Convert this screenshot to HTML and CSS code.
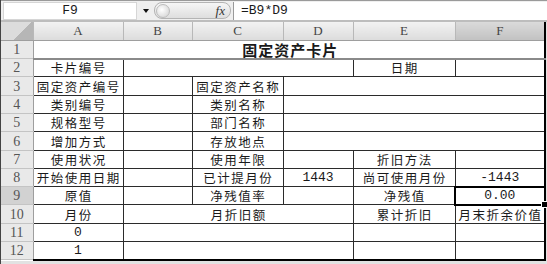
FILE: index.html
```html
<!DOCTYPE html>
<html lang="zh">
<head>
    <meta charset="UTF-8">
    <title>固定资产卡片</title>
    <link rel="stylesheet" href="styles.css">
</head>
<body>
<div class="window">
    <div class="formula-bar">
        <div class="name-box">F9</div>
        <span class="drop"></span>
        <div class="fx-group">
            <span class="knob"></span>
            <span class="fx">fx</span>
        </div>
        <div class="formula">=B9*D9</div>
    </div>
    <div class="gap"></div>

    <table class="sheet">
        <colgroup>
            <col class="w-rh"><col class="w-a"><col class="w-b"><col class="w-c"><col class="w-d"><col class="w-e"><col class="w-f">
        </colgroup>
        <tr class="col-head">
            <th class="corner"></th><th>A</th><th>B</th><th>C</th><th>D</th><th>E</th><th class="picked">F</th>
        </tr>
        <tr class="r-title">
            <th class="rh">1</th><td colspan="6" class="title f">固定资产卡片</td>
        </tr>
        <tr>
            <th class="rh">2</th><td>卡片编号</td><td colspan="3"></td><td>日期</td><td class="f"></td>
        </tr>
        <tr>
            <th class="rh">3</th><td>固定资产编号</td><td></td><td>固定资产名称</td><td colspan="3" class="f"></td>
        </tr>
        <tr>
            <th class="rh">4</th><td>类别编号</td><td></td><td>类别名称</td><td colspan="3" class="f"></td>
        </tr>
        <tr>
            <th class="rh">5</th><td>规格型号</td><td></td><td>部门名称</td><td colspan="3" class="f"></td>
        </tr>
        <tr>
            <th class="rh">6</th><td>增加方式</td><td></td><td>存放地点</td><td colspan="3" class="f"></td>
        </tr>
        <tr>
            <th class="rh">7</th><td>使用状况</td><td></td><td>使用年限</td><td></td><td>折旧方法</td><td class="f"></td>
        </tr>
        <tr>
            <th class="rh">8</th><td>开始使用日期</td><td></td><td>已计提月份</td><td class="num">1443</td><td>尚可使用月份</td><td class="num f">-1443</td>
        </tr>
        <tr>
            <th class="rh picked">9</th><td>原值</td><td></td><td>净残值率</td><td></td><td>净残值</td><td class="num f sel">0.00</td>
        </tr>
        <tr>
            <th class="rh">10</th><td>月份</td><td colspan="3">月折旧额</td><td>累计折旧</td><td class="f">月末折余价值</td>
        </tr>
        <tr>
            <th class="rh">11</th><td class="num">0</td><td colspan="3"></td><td></td><td class="f"></td>
        </tr>
        <tr class="last">
            <th class="rh">12</th><td class="num">1</td><td colspan="3"></td><td></td><td class="f"></td>
        </tr>
    </table>
</div>
</body>
</html>
```

FILE: styles.css
```css
body {
    margin: 0;
    background: #fff;
    font-family: "Noto Sans CJK SC", sans-serif;
    color: #1a1a1a;
}

.window {
    width: 547px;
    height: 264px;
    overflow: hidden;
    background: #e2e2e2;
    border-left: 1px solid #444;
    box-sizing: border-box;
}

/* formula bar */
.formula-bar {
    display: flex;
    align-items: center;
    height: 19px;
    background: #efefef;
    border-top: 1px solid #9a9a9a;
    padding-left: 2px;
}

.name-box {
    width: 132px;
    height: 16px;
    background: #fff;
    border: 1px solid #d6d6d6;
    font: 13px "Liberation Mono", monospace;
    line-height: 16px;
    text-align: center;
}

.drop {
    width: 0;
    height: 0;
    border-left: 3px solid transparent;
    border-right: 3px solid transparent;
    border-top: 4px solid #111;
    margin: 0 5px 0 6px;
}

.fx-group {
    width: 69px;
    height: 15px;
    border: 1px solid #b4b4b4;
    border-radius: 8px;
    background: linear-gradient(#f6f6f6, #dedede);
    display: flex;
    align-items: center;
    justify-content: space-between;
    padding: 0 5px 0 1px;
}

.knob {
    width: 12px;
    height: 12px;
    border-radius: 50%;
    border: 1px solid #bcbcbc;
    background: radial-gradient(circle at 40% 40%, #fff, #cfcfcf);
}

.fx {
    font: italic 13px "Liberation Serif", serif;
    color: #333;
}

.formula {
    flex: 1;
    height: 18px;
    background: #fff;
    border-left: 1px solid #9a9a9a;
    margin-left: 2px;
    padding-left: 7px;
    font: 13px "Liberation Mono", monospace;
    line-height: 18px;
}

.gap {
    height: 2px;
    background: #bdbdbd;
}

/* sheet grid */
.sheet {
    border-collapse: collapse;
    table-layout: fixed;
    width: 545px;
    background: #fff;
}

.w-rh { width: 32px; }
.w-a { width: 90px; }
.w-b { width: 69px; }
.w-c { width: 91px; }
.w-d { width: 70px; }
.w-e { width: 102px; }
.w-f { width: 90px; }

.sheet tr { height: 18.3px; }

.sheet td {
    border: 1px solid #2b2b2b;
    padding: 0 0 1px;
    text-align: center;
    vertical-align: bottom;
    font-size: 12.5px;
    letter-spacing: 1.5px;
    text-indent: 1.5px;
    line-height: 15px;
    white-space: nowrap;
}

.col-head { height: 18px; }

.col-head th {
    background: linear-gradient(#f2f2f2, #dcdcdc);
    border-right: 1px solid #b8b8b8;
    border-bottom: 1px solid #9e9e9e;
    font: 13px "Liberation Serif", serif;
    color: #444;
    padding: 0;
}

.col-head th.picked {
    background: linear-gradient(#dadada, #c2c2c2);
    border-right: 2px solid #000;
}

.col-head .corner {
    background: linear-gradient(135deg, #dcdcdc 62%, #b6b6b6 62%);
}

.rh {
    background: #e9e9e9;
    border-right: 1px solid #9e9e9e;
    border-bottom: 1px solid #c4c4c4;
    font: normal 14px "Liberation Serif", serif;
    color: #555;
    padding: 0;
    vertical-align: bottom;
    line-height: 16px;
}

.rh.picked {
    background: #d2d2d2;
}

.r-title { height: 22px; }

.sheet td.title {
    border-top: none;
    border-left: none;
    border-bottom: 2px solid #8a8a8a;
    font-size: 15px;
    letter-spacing: 1px;
    text-indent: 3px;
    font-weight: bold;
    vertical-align: middle;
    padding: 0;
}

.sheet td.f {
    border-right: 2px solid #000;
}

.last td {
    border-bottom: 2px solid #000;
}

.sheet td.num {
    font-family: "Liberation Mono", monospace;
    font-size: 13px;
    letter-spacing: 0;
    text-indent: 0;
}

.sheet td.sel {
    position: relative;
    outline: 2px solid #000;
    outline-offset: -1px;
}

.sel::after {
    content: "";
    position: absolute;
    right: -4px;
    bottom: -4px;
    width: 5px;
    height: 5px;
    background: #000;
    border: 1px solid #fff;
}
```
